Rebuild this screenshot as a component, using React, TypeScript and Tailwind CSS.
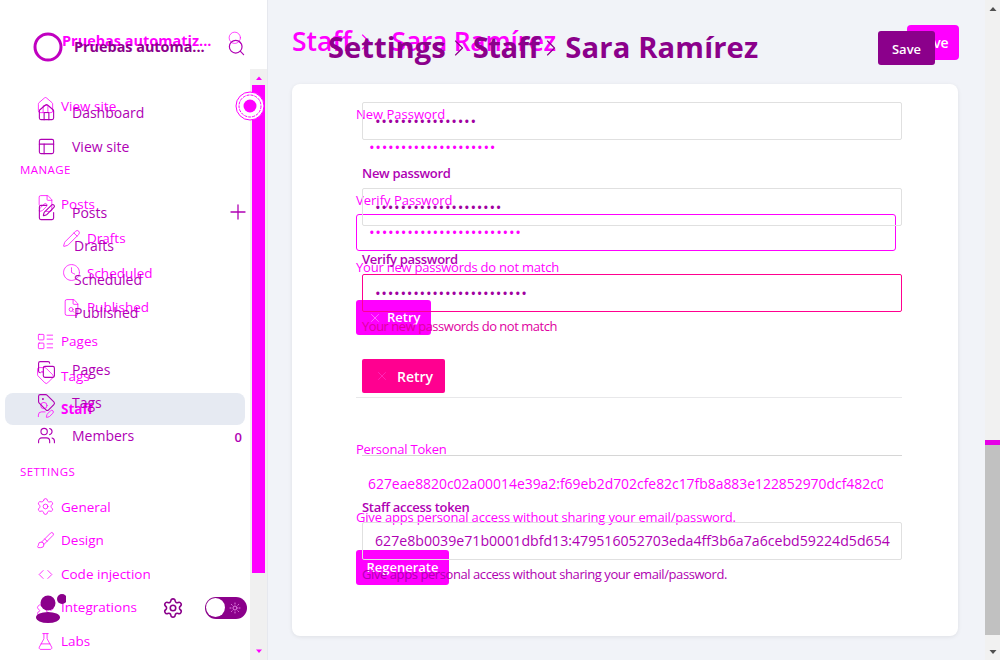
import type { ReactNode } from "react";
import {
  Brush,
  ChevronRight,
  ChevronsLeftRight,
  Clock,
  Copy,
  FilePen,
  FileSearch,
  FlaskConical,
  House,
  LayoutList,
  PanelsTopLeft,
  Pencil,
  Plus,
  Puzzle,
  Search,
  Settings,
  SquarePen,
  Sun,
  Tag,
  UserPen,
  Users,
  X,
} from "lucide-react";

const TOKEN_A = "627e8b0039e71b0001dbfd13:479516052703eda4ff3b6a7a6cebd59224d5d654";
const TOKEN_B = "627eae8820c02a00014e39a2:f69eb2d702cfe82c17fb8a883e122852970dcf482c0a";

function Dots({ count, className }: { count: number; className: string }) {
  return <span className={`text-[15px] leading-none tracking-[0.72px] ${className}`}>{"•".repeat(count)}</span>;
}

function BackRow({ icon, label, indent, bold }: { icon: ReactNode; label: string; indent?: boolean; bold?: boolean }) {
  return (
    <div className={`flex items-center ${indent ? "pl-[63px]" : "pl-[37px]"}`}>
      <span className="flex w-[16px] justify-center [&>svg]:shrink-0">{icon}</span>
      <span className={`ml-[8px] text-[13.5px] ${bold ? "font-bold" : ""}`}>{label}</span>
    </div>
  );
}

function FrontRow({ icon, label, sub, right }: { icon?: ReactNode; label: string; sub?: boolean; right?: ReactNode }) {
  return (
    <div className="flex h-[33.4px] items-center pl-[38px] pr-[26px]">
      <span className="flex w-[16px] justify-center [&>svg]:shrink-0">{icon}</span>
      <span className={`text-[14px] ${sub ? "ml-[20px]" : "ml-[18px]"}`}>{label}</span>
      <span className="ml-auto">{right}</span>
    </div>
  );
}

function MagentaLayer() {
  const ic = { size: 19, strokeWidth: 1 };
  return (
    <div className="flex h-[660px] w-[1000px] bg-[#f1f3f8] text-[#ff00ff]">
      <aside className="flex w-[268px] border-r border-[#e6e8ee] bg-white">
        <div className="w-[250px]">
          <div className="flex h-[89px] items-center pb-[7px] pl-[62px] pr-[6px]">
            <span className="text-[14.5px] font-bold whitespace-nowrap">Pruebas automatiz...</span>
            <Search size={17} strokeWidth={1} className="mb-[6px] ml-auto" />
          </div>
          <div className="h-[33.7px] [&>div]:h-full">
            <BackRow icon={<House {...ic} />} label="View site" />
          </div>
          <div className="flex h-[56px] items-end pl-[20px] text-[11.5px] tracking-[0.4px]">MANAGE</div>
          <div className="pt-[8px] [&>div]:h-[34.4px]">
            <BackRow icon={<FilePen {...ic} />} label="Posts" />
            <BackRow indent icon={<Pencil {...ic} />} label="Drafts" />
            <BackRow indent icon={<Clock {...ic} strokeDasharray="2 1" />} label="Scheduled" />
            <BackRow indent icon={<FileSearch {...ic} />} label="Published" />
            <BackRow icon={<LayoutList {...ic} />} label="Pages" />
            <BackRow icon={<Tag {...ic} />} label="Tags" />
          </div>
          <div className="mx-[5px] h-[32px] rounded-lg bg-[#e6eaf2] [&>div]:h-full [&>div]:pl-[32px]">
            <BackRow bold icon={<UserPen {...ic} />} label="Staff" />
          </div>
          <div className="flex h-[55px] items-end pl-[20px] text-[11.5px] tracking-[0.4px]">SETTINGS</div>
          <div className="pt-[10px] [&>div]:h-[33.6px]">
            <BackRow icon={<Settings {...ic} />} label="General" />
            <BackRow icon={<Brush {...ic} />} label="Design" />
            <BackRow icon={<ChevronsLeftRight {...ic} />} label="Code injection" />
            <BackRow icon={<Puzzle {...ic} />} label="Integrations" />
            <BackRow icon={<FlaskConical {...ic} />} label="Labs" />
          </div>
        </div>
        <div className="mt-[69px] flex w-[17px] flex-col items-center bg-[#f0f0f0]">
          <svg width="8" height="16" viewBox="0 0 8 16" className="shrink-0">
            <path d="M1 11 4 7.5 7 11z" fill="#ff00ff" />
          </svg>
          <div className="h-[488px] w-[13px] bg-[#ff00ff]" />
          <svg width="8" height="16" viewBox="0 0 8 16" className="mt-auto shrink-0">
            <path d="M1 5.5 4 9 7 5.5z" fill="#ff00ff" />
          </svg>
        </div>
      </aside>
      <main className="flex w-[732px]">
        <div className="w-[717px]">
          <header className="flex h-[84px] items-center pl-[24px] pr-[26px]">
            <h2 className="flex items-center text-[26.5px] font-semibold">
              <span>Staff</span>
              <ChevronRight size={28} strokeWidth={1} />
              <span className="ml-[12px] tracking-[-0.3px]">Sara Ramírez</span>
            </h2>
            <button className="ml-auto h-[35px] w-[52px] rounded bg-[#ff00ff] text-[14px] font-semibold text-white">Save</button>
          </header>
          <section className="mx-[24px] h-[552px] w-[666px] rounded-lg bg-white pl-[64px] pt-[20px] shadow-[0_1px_4px_rgba(0,0,0,0.08)]">
            <div className="w-[540px]">
              <p className="h-[20px] text-[13px] leading-[20px] font-medium">New Password</p>
              <div className="mt-[4px] flex h-[38px] items-center pl-[13px]">
                <Dots count={20} className="text-[#ff00ff]" />
              </div>
              <p className="mt-[24px] h-[20px] text-[13px] leading-[20px] font-medium">Verify Password</p>
              <div className="mt-[4px] flex h-[37px] items-center rounded-[3px] border border-[#ff00ff] pl-[12px]">
                <Dots count={24} className="text-[#ff00ff]" />
              </div>
              <p className="mt-[8px] h-[17px] text-[13px] leading-[17px] tracking-[-0.22px]">Your new passwords do not match</p>
              <button className="mt-[24px] flex h-[35px] w-[75px] items-center rounded-[3px] bg-[#ff00ff] pl-[12px] text-[13px] font-semibold text-white">
                <X size={14} strokeWidth={1} className="text-[#ffb0ff]" />
                <span className="ml-[5px]">Retry</span>
              </button>
              <p className="mt-[104px] h-[20px] text-[13px] leading-[20px] tracking-[-0.2px]">Personal Token</p>
              <div className="mt-[6px] flex h-[38px] w-[527px] items-center overflow-hidden pl-[12px] text-[13.9px] whitespace-nowrap">
                {TOKEN_B}
              </div>
              <p className="mt-[6px] h-[17px] text-[13px] leading-[17px] tracking-[-0.18px]">Give apps personal access without sharing your email/password.</p>
              <button className="mt-[24px] h-[35px] w-[93px] rounded-[3px] bg-[#ff00ff] text-[13px] font-semibold text-white">Regenerate</button>
            </div>
          </section>
        </div>
        <div className="flex w-[15px] flex-col items-center bg-[#f1f1f1]">
          <svg width="8" height="16" viewBox="0 0 8 16" className="shrink-0">
            <path d="M0.5 11 4 7 7.5 11z" fill="#505050" />
          </svg>
          <div className="mt-[424px] h-[195px] w-full border-t-[5px] border-[#e600e6] bg-[#c1c1c1]" />
          <svg width="8" height="16" viewBox="0 0 8 16" className="mt-auto shrink-0">
            <path d="M0.5 6 4 10 7.5 6z" fill="#505050" />
          </svg>
        </div>
      </main>
    </div>
  );
}

function PurpleLayer() {
  const ic = { size: 19, strokeWidth: 1.4 };
  return (
    <div className="absolute inset-0 flex text-[#b000b4]">
      <aside className="relative w-[268px]">
        <div className="flex h-[96px] items-center pb-[2px] pl-[33px] pr-[22px]">
          <svg width="30" height="30" viewBox="0 0 30 30" className="shrink-0">
            <circle cx="15" cy="15" r="13" fill="none" stroke="#c000c0" strokeWidth="3" />
          </svg>
          <span className="ml-[11px] text-[14.4px] font-bold whitespace-nowrap text-[#8b008b]">Pruebas automa...</span>
          <Search size={19} strokeWidth={1.5} className="ml-auto" />
        </div>
        <FrontRow icon={<House {...ic} />} label="Dashboard" />
        <FrontRow icon={<PanelsTopLeft {...ic} />} label="View site" />
        <div className="h-[33px]" />
        <FrontRow icon={<SquarePen {...ic} />} label="Posts" right={<Plus size={24} strokeWidth={1.3} className="-mr-[8px]" />} />
        <FrontRow sub label="Drafts" />
        <FrontRow sub label="Scheduled" />
        <FrontRow sub label="Published" />
        <div className="h-[23px]" />
        <FrontRow icon={<Copy {...ic} />} label="Pages" />
        <FrontRow icon={<Tag {...ic} />} label="Tags" />
        <FrontRow
          icon={<Users {...ic} />}
          label="Members"
          right={<span className="text-[13px] font-semibold">0</span>}
        />
        <div className="flex pt-[141px] pl-[36px] pr-[21px]">
          <svg width="30" height="30" viewBox="0 0 30 30" className="shrink-0">
            <circle cx="12" cy="9" r="7.5" fill="#8b008b" />
            <ellipse cx="12" cy="23.5" rx="12" ry="5.5" fill="#8b008b" />
            <circle cx="26" cy="5" r="5" fill="#8b008b" />
          </svg>
          <Settings size={22} strokeWidth={1.7} className="ml-[96px] mt-[3px] text-[#8b008b]" />
          <div className="ml-auto mt-[3px] flex h-[22px] w-[42px] items-center justify-between rounded-full bg-[#8b008b] pl-[1px] pr-[6px]">
            <span className="h-[19px] w-[19px] rounded-full bg-white" />
            <Sun size={12} strokeWidth={2} className="text-[#e080e0]" />
          </div>
        </div>
        {/* loading ring sitting on the sidebar scrollbar */}
        <svg width="30" height="30" viewBox="0 0 30 30" className="absolute left-[235px] top-[91px]">
          <circle cx="15" cy="15" r="14" fill="#fff" stroke="#ff00ff" />
          <circle cx="15" cy="15" r="11" fill="none" stroke="#ff00ff" strokeDasharray="3 1" />
          <circle cx="15" cy="15" r="6.5" fill="#ff00ff" />
        </svg>
      </aside>
      <main className="w-[732px]">
        <header className="flex h-[96px] items-center pl-[60px] pr-[65px]">
          <h1 className="flex items-center text-[29.2px] font-bold text-[#8b008b]">
            <span>Settings</span>
            <ChevronRight size={28} strokeWidth={1} className="-ml-[1px]" />
            <span className="tracking-[-0.5px]">Staff</span>
            <ChevronRight size={28} strokeWidth={1} className="-ml-[2px]" />
            <span className="tracking-[0.15px]">Sara Ramírez</span>
          </h1>
          <button className="ml-auto h-[34px] w-[57px] rounded-[3px] bg-[#8b008b] pt-[3px] text-[13px] font-semibold text-white">Save</button>
        </header>
        <div className="ml-[94px] w-[540px] pt-[6px]">
          <div className="flex h-[38px] items-center rounded-[2px] border border-[#e0e0e0] pl-[12px]">
            <Dots count={16} className="text-[#a000a0]" />
          </div>
          <p className="mt-[23px] h-[20px] text-[13px] leading-[20px] font-semibold tracking-[-0.3px]">New password</p>
          <div className="mt-[5px] flex h-[38px] items-center rounded-[2px] border border-[#e0e0e0] pl-[12px]">
            <Dots count={20} className="text-[#a000a0]" />
          </div>
          <p className="mt-[23px] h-[20px] text-[13px] leading-[20px] font-semibold tracking-[-0.3px]">Verify password</p>
          <div className="mt-[5px] flex h-[38px] items-center rounded-[2px] border border-[#ff0090] pl-[12px]">
            <Dots count={24} className="text-[#a000a0]" />
          </div>
          <p className="mt-[6px] h-[17px] text-[13px] leading-[17px] tracking-[-0.48px] text-[#e000a0]">Your new passwords do not match</p>
          <button className="mt-[24px] flex h-[34px] w-[83px] items-center rounded-[2px] bg-[#ff0090] pl-[13px] text-[14px] font-semibold text-white">
            <X size={14} strokeWidth={1} className="text-[#ff40d0]" />
            <span className="ml-[8px]">Retry</span>
          </button>
          <div className="-ml-[6px] mt-[4px] h-px w-[546px] bg-[#e8e8ea]" />
          <div className="mt-[57px] h-px w-[540px] bg-[#d6d6d6]" />
          <p className="mt-[41px] h-[20px] text-[13px] leading-[20px] font-semibold tracking-[-0.3px]">Staff access token</p>
          <div className="mt-[5px] flex h-[38px] items-center overflow-hidden rounded-[2px] border border-[#e0e0e0] pl-[12px] text-[14.15px] whitespace-nowrap">
            {TOKEN_A}
          </div>
          <p className="mt-[6px] h-[17px] text-[13px] leading-[17px] tracking-[-0.42px] text-[#b000b0]">Give apps personal access without sharing your email/password.</p>
        </div>
      </main>
    </div>
  );
}

export default function App() {
  return (
    <div className="relative h-[660px] w-[1000px] overflow-hidden font-['Open_Sans','Noto_Sans',sans-serif]">
      <MagentaLayer />
      <PurpleLayer />
    </div>
  );
}
